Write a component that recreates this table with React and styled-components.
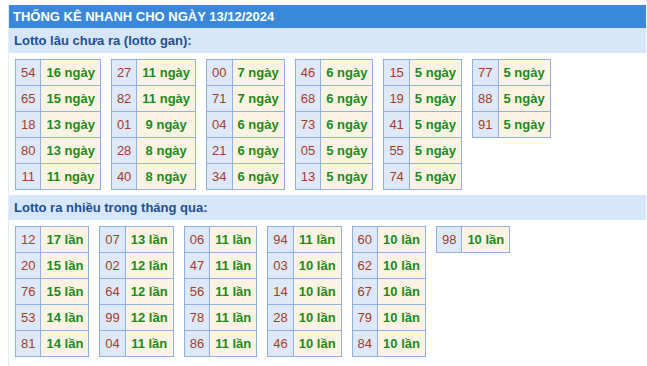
import React from 'react'
import styled, { createGlobalStyle } from 'styled-components'

const GlobalStyle = createGlobalStyle`
    body {
        margin: 0;
        background: #fff;
        font-family: "Liberation Sans", Arial, sans-serif;
    }
`

const Page = styled.div`
    padding: 5px 0 0 8px;
`

const Box = styled.div`
    width: 637px;
    border-left: 1px solid #e4ecf5;
    min-height: 361px;
`

const Title = styled.h2`
    margin: 0;
    height: 23px;
    line-height: 23px;
    padding-left: 4px;
    background: #3a88d9;
    color: #fff;
    font-size: 13px;
    font-weight: bold;
`

const SubTitle = styled.h3`
    margin: 0;
    height: 25px;
    line-height: 25px;
    padding-left: 5px;
    background: #d5e7f9;
    color: #1d4f93;
    font-size: 13px;
    font-weight: bold;
`

const TableList = styled.div`
    display: flex;
    flex-wrap: wrap;
    align-items: flex-start;
    gap: 10px;
    padding: 6px 6px 5px;
`

const Table = styled.table`
    border-collapse: collapse;
    font-size: 13px;
`

const Cell = styled.td`
    height: 25px;
    padding: 0 5px;
    border: 1px solid #8fb1e2;
    text-align: center;
    white-space: nowrap;
    background: ${(p) => (p.$num ? '#dde9f9' : '#fdf3e2')};
    color: ${(p) => (p.$num ? '#a63a27' : '#1b8a1b')};
    font-weight: ${(p) => (p.$num ? 'normal' : 'bold')};
`

const gan = [
    [['54', 16], ['65', 15], ['18', 13], ['80', 13], ['11', 11]],
    [['27', 11], ['82', 11], ['01', 9], ['28', 8], ['40', 8]],
    [['00', 7], ['71', 7], ['04', 6], ['21', 6], ['34', 6]],
    [['46', 6], ['68', 6], ['73', 6], ['05', 5], ['13', 5]],
    [['15', 5], ['19', 5], ['41', 5], ['55', 5], ['74', 5]],
    [['77', 5], ['88', 5], ['91', 5]],
]

const nhieu = [
    [['12', 17], ['20', 15], ['76', 15], ['53', 14], ['81', 14]],
    [['07', 13], ['02', 12], ['64', 12], ['99', 12], ['04', 11]],
    [['06', 11], ['47', 11], ['56', 11], ['78', 11], ['86', 11]],
    [['94', 11], ['03', 10], ['14', 10], ['28', 10], ['46', 10]],
    [['60', 10], ['62', 10], ['67', 10], ['79', 10], ['84', 10]],
    [['98', 10]],
]

function Section({ title, groups, unit }) {
    return (
        <>
            <SubTitle>{title}</SubTitle>
            <TableList>
                {groups.map((rows, i) => (
                    <Table key={i}>
                        <tbody>
                            {rows.map(([num, count]) => (
                                <tr key={num}>
                                    <Cell $num>{num}</Cell>
                                    <Cell>{`${count} ${unit}`}</Cell>
                                </tr>
                            ))}
                        </tbody>
                    </Table>
                ))}
            </TableList>
        </>
    )
}

export default function App() {
    return (
        <Page>
            <GlobalStyle />
            <Box>
                <Title>THỐNG KÊ NHANH CHO NGÀY 13/12/2024</Title>
                <Section title="Lotto lâu chưa ra (lotto gan):" groups={gan} unit="ngày" />
                <Section title="Lotto ra nhiều trong tháng qua:" groups={nhieu} unit="lần" />
            </Box>
        </Page>
    )
}
